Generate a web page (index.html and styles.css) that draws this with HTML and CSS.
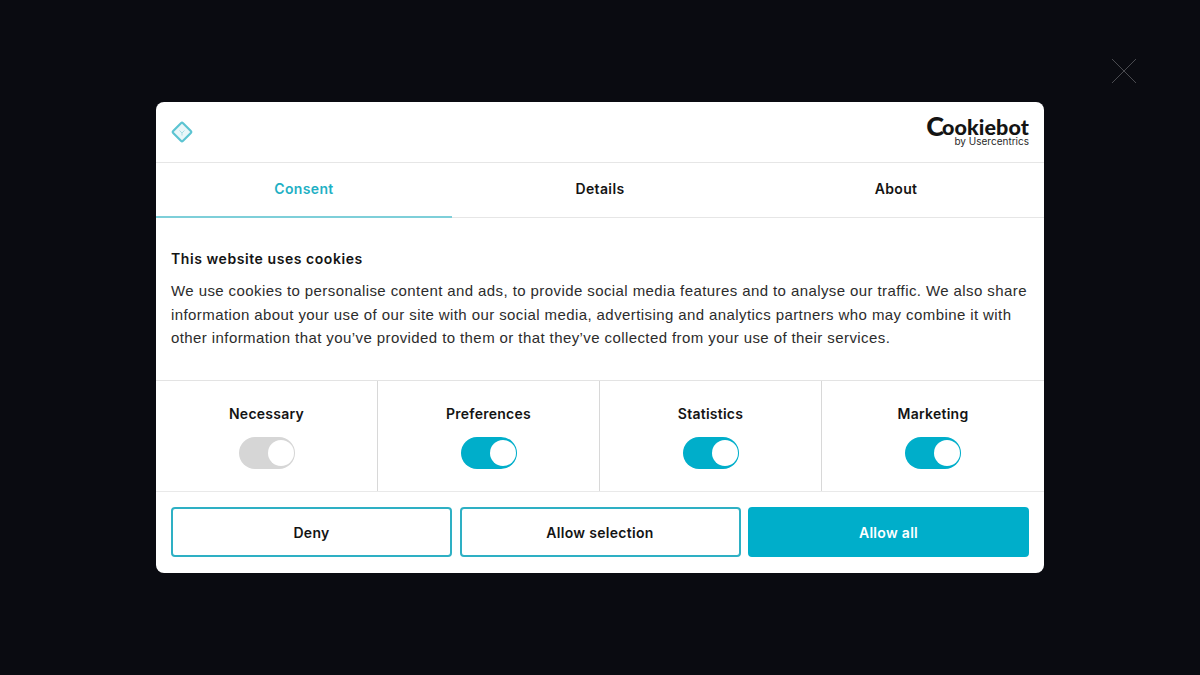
FILE: index.html
```html
<!DOCTYPE html>
<html lang="en">
<head>
<meta charset="utf-8">
<title>Cookie consent</title>
<link rel="stylesheet" href="styles.css">
</head>
<body>
<button class="close" aria-label="Close">
  <svg width="26" height="26" viewBox="0 0 26 26"><path d="M1 1 L25 25 M25 1 L1 25" stroke="#4a4b50" stroke-width="1" fill="none"/></svg>
</button>
<main class="dialog">
  <header class="top">
    <svg class="mark" width="24" height="24" viewBox="0 0 24 24">
      <rect x="5" y="5" width="14" height="14" rx="1.5" transform="rotate(45 12 12)" fill="#eaf7f9" stroke="#5cc4d2" stroke-width="2.2"/>
      <path d="M9.5 10.5 L12 13 L14.5 10.5 M12 13 V15.5" stroke="#a9dde5" stroke-width="1" fill="none"/>
    </svg>
    <div class="brand">
      <div class="brand-name"><span class="brand-c">C</span>ookiebot</div>
      <div class="brand-sub">by Usercentrics</div>
    </div>
  </header>
  <nav class="tabs">
    <div class="tab active">Consent</div>
    <div class="tab">Details</div>
    <div class="tab">About</div>
  </nav>
  <section class="body">
    <h1>This website uses cookies</h1>
    <p>We use cookies to personalise content and ads, to provide social media features and to analyse our traffic. We also share information about your use of our site with our social media, advertising and analytics partners who may combine it with other information that you’ve provided to them or that they’ve collected from your use of their services.</p>
  </section>
  <section class="toggles">
    <div class="cat"><span class="cat-name">Necessary</span><span class="switch off"><i></i></span></div>
    <div class="cat"><span class="cat-name">Preferences</span><span class="switch"><i></i></span></div>
    <div class="cat"><span class="cat-name">Statistics</span><span class="switch"><i></i></span></div>
    <div class="cat"><span class="cat-name">Marketing</span><span class="switch"><i></i></span></div>
  </section>
  <footer class="actions">
    <button class="btn">Deny</button>
    <button class="btn">Allow selection</button>
    <button class="btn primary">Allow all</button>
  </footer>
</main>
</body>
</html>
```

FILE: styles.css
```css
* { box-sizing: border-box; }
html, body { margin: 0; height: 100%; }
body {
  width: 1200px;
  height: 675px;
  overflow: hidden;
  background: #0a0b11;
  font-family: Inter, "Liberation Sans", sans-serif;
  color: #141414;
  padding-top: 102px;
  display: flex;
  justify-content: center;
  align-items: flex-start;
}
.close {
  position: absolute;
  left: 1111px;
  top: 58px;
  width: 26px;
  height: 26px;
  padding: 0;
  border: 0;
  background: none;
  display: block;
}
.close svg { display: block; }
.dialog {
  width: 888px;
  height: 471px;
  background: #fff;
  border-radius: 8px;
  display: flex;
  flex-direction: column;
  overflow: hidden;
}
.top {
  height: 61px;
  flex: none;
  display: flex;
  align-items: center;
  justify-content: space-between;
  padding: 0 15px 1px 14px;
  border-bottom: 1px solid #e6e6e6;
}
.mark { display: block; }
.brand { display: flex; flex-direction: column; align-items: flex-end; color: #141414; }
.brand-name {
  font-family: Lato, "Liberation Sans", sans-serif;
  font-weight: 900;
  font-size: 21.5px;
  line-height: 20px;
  height: 20px;
  letter-spacing: 0.1px;
}
.brand-c {
  font-size: 27px;
  line-height: 20px;
  letter-spacing: -2px;
  vertical-align: -1px;
}
.brand-sub {
  font-size: 10px;
  line-height: 11px;
  color: #2a2a2a;
}
.tabs {
  height: 55px;
  flex: none;
  display: grid;
  grid-template-columns: repeat(3, 1fr);
  border-bottom: 1px solid #e6e6e6;
}
.tab {
  display: flex;
  align-items: center;
  justify-content: center;
  font-size: 14px;
  font-weight: 600;
  letter-spacing: 0.35px;
  padding-bottom: 4px;
  height: 55px;
}
.tab.active {
  color: #1fb0c4;
  padding-bottom: 2px;
  border-bottom: 2px solid #7ecfd9;
}
.body {
  height: 162px;
  flex: none;
  padding: 32px 15px 0;
}
h1 {
  margin: 0 0 11px;
  font-size: 14px;
  line-height: 18px;
  font-weight: 600;
  letter-spacing: 0.56px;
}
p {
  margin: 0;
  font-family: "Liberation Sans", Arial, sans-serif;
  font-size: 15px;
  line-height: 23.7px;
  color: #2c2c2c;
  letter-spacing: 0.41px;
}
.toggles {
  height: 112px;
  flex: none;
  display: grid;
  grid-template-columns: repeat(4, 1fr);
  border-top: 1px solid #e3e3e3;
  border-bottom: 1px solid #e9e9e9;
}
.cat {
  display: flex;
  flex-direction: column;
  align-items: center;
  padding-top: 24px;
  border-right: 1px solid #d8d8d8;
}
.cat:last-child { border-right: 0; }
.cat-name {
  font-size: 14px;
  line-height: 18px;
  font-weight: 600;
  letter-spacing: 0.25px;
}
.switch {
  width: 56px;
  height: 32px;
  margin-top: 14px;
  border-radius: 16px;
  background: #00aeca;
  position: relative;
  display: block;
}
.switch i {
  position: absolute;
  right: 1px;
  top: 3px;
  width: 26px;
  height: 26px;
  border-radius: 50%;
  background: #fff;
}
.switch.off { background: #d6d6d6; }
.actions {
  flex: 1;
  display: grid;
  grid-template-columns: repeat(3, 281px);
  column-gap: 7.5px;
  padding: 15px 15px 16px 15px;
}
.btn {
  font-family: inherit;
  font-size: 14px;
  font-weight: 600;
  letter-spacing: 0.3px;
  color: #141414;
  background: #fff;
  border: 2px solid #2eb0c4;
  border-radius: 4px;
  padding: 0;
}
.btn.primary {
  background: #00aeca;
  border-color: #00aeca;
  color: #fff;
}
```
